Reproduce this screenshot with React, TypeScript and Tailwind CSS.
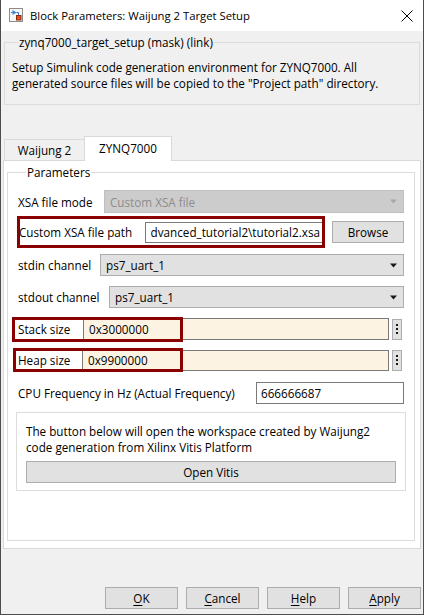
import React from "react";

function Arrow({ disabled }: { disabled?: boolean }) {
  return (
    <svg width="9" height="5" viewBox="0 0 9 5" className="shrink-0">
      <path d="M1 0.5 L8 0.5 L4.5 4.5 Z" fill={disabled ? "#a8a8a8" : "#1a1a1a"} />
    </svg>
  );
}

function Combo({ value, disabled, h = 22 }: { value: string; disabled?: boolean; h?: number }) {
  return (
    <div
      className={
        "flex-1 flex items-center justify-between pl-[5px] pr-[5px] border " +
        (disabled
          ? "bg-[#cccccc] border-[#bfbfbf] text-[#8c8c8c]"
          : "bg-[#e1e1e1] border-[#adadad] text-black")
      }
      style={{ height: h }}
    >
      <span className="whitespace-nowrap">{value}</span>
      <Arrow disabled={disabled} />
    </div>
  );
}

function DotsButton() {
  return (
    <div className="w-[10px] h-[21px] ml-[3px] mr-[2px] border border-[#adadad] bg-[#e1e1e1] flex flex-col items-center justify-center gap-[2px]">
      <div className="w-[2px] h-[2px] bg-[#1a1a1a]" />
      <div className="w-[2px] h-[2px] bg-[#1a1a1a]" />
      <div className="w-[2px] h-[2px] bg-[#1a1a1a]" />
    </div>
  );
}

function Btn({ first, rest }: { first: string; rest: string }) {
  return (
    <div className="w-[73px] h-[22px] border border-[#adadad] bg-[#e1e1e1] flex items-center justify-center text-black">
      <span>
        <span className="underline underline-offset-[2px]">{first}</span>
        {rest}
      </span>
    </div>
  );
}

export default function App() {
  return (
    <div className="w-[424px] h-[615px] bg-[#f0f0f0] border-x border-b border-[#4d4d4d] flex flex-col overflow-hidden font-['Open_Sans','Noto_Sans',sans-serif] text-[11.7px] leading-[16px] text-black">
      {/* Title bar */}
      <div className="h-[31px] bg-white flex items-center shrink-0">
        <div className="ml-[8px] mt-[-2px]">
          <svg width="14" height="14" viewBox="0 0 14 14">
            <rect x="0.5" y="0.5" width="13" height="13" fill="#f6f6f6" stroke="#8c8c8c" />
            <path d="M2 4.5 H3.5" stroke="#2f6fc6" strokeWidth="1" />
            <path d="M3.5 2 L7.5 4.5 L3.5 7 Z" fill="#3b82d6" />
            <path d="M7.5 4.5 H9.5 V7" stroke="#2f6fc6" strokeWidth="1" fill="none" />
            <rect x="7.5" y="7.5" width="4.5" height="4.5" fill="#e2501f" stroke="#8a2a0a" strokeWidth="1" />
          </svg>
        </div>
        <span className="ml-[7px] text-[11.3px] whitespace-nowrap">Block Parameters: Waijung 2 Target Setup</span>
        <div className="ml-auto mr-[10px]">
          <svg width="12" height="12" viewBox="0 0 12 12">
            <path d="M0.5 0.5 L11.5 11.5 M11.5 0.5 L0.5 11.5" stroke="#000" strokeWidth="1" />
          </svg>
        </div>
      </div>

      {/* Mask group box */}
      <fieldset className="mx-[3px] mt-[3px] border border-[#dcdcdc] px-[7px] pb-[13px]">
        <legend className="ml-[6px] px-[1px] whitespace-nowrap">zynq7000_target_setup (mask) (link)</legend>
        <div className="pt-[9px] whitespace-nowrap">
          Setup Simulink code generation environment for ZYNQ7000. All
          <br />
          generated source files will be copied to the "Project path" directory.
        </div>
      </fieldset>

      {/* Tabs */}
      <div className="mt-[31px] ml-[3px] flex items-end h-[25px] relative z-10 -mb-[1px]">
        <div className="w-[80px] h-[21px] mb-[1px] border border-r-0 border-b-0 border-[#d9d9d9] bg-[#f0f0f0] flex items-center justify-center">
          Waijung 2
        </div>
        <div className="w-[88px] h-[25px] border border-b-0 border-[#d9d9d9] bg-white flex items-center justify-center pb-[2px]">
          ZYNQ7000
        </div>
      </div>

      {/* Tab panel */}
      <div className="ml-[2px] mr-[2px] h-[389px] bg-white border border-[#d9d9d9] shrink-0 flex flex-col">
        <fieldset className="ml-[3px] mr-[5px] mt-[3px] border border-[#dcdcdc] pl-[10px] pr-[10px] pb-[49px]">
          <legend className="ml-[8px] px-[1px]">Parameters</legend>

          {/* XSA file mode */}
          <div className="mt-[10px] h-[23px] flex items-center">
            <div className="w-[86px] whitespace-nowrap">XSA file mode</div>
            <Combo value="Custom XSA file" disabled h={23} />
          </div>

          {/* Custom XSA file path */}
          <div className="mt-[3px] h-[32px] flex items-center relative">
            <div className="w-[127px] pl-[1px] whitespace-nowrap">Custom XSA file path</div>
            <div className="w-[178px] h-[21px] border border-[#7a7a7a] bg-white flex items-center justify-end overflow-hidden pr-[2px]">
              <span className="whitespace-nowrap">dvanced_tutorial2\tutorial2.xsa</span>
            </div>
            <div className="ml-[9px] w-[72px] h-[22px] border border-[#adadad] bg-[#e1e1e1] flex items-center justify-center">
              Browse
            </div>
            <div className="absolute left-[-1px] top-0 w-[308px] h-[32px] border-[3px] border-[#8b0000] pointer-events-none" />
          </div>

          {/* stdin */}
          <div className="mt-[6px] h-[22px] flex items-center">
            <div className="w-[82px] whitespace-nowrap">stdin channel</div>
            <Combo value="ps7_uart_1" />
          </div>

          {/* stdout */}
          <div className="mt-[10px] h-[22px] flex items-center">
            <div className="w-[91px] whitespace-nowrap">stdout channel</div>
            <Combo value="ps7_uart_1" />
          </div>

          {/* Stack size */}
          <div className="mt-[9px] h-[24px] flex items-center relative">
            <div className="w-[65px] whitespace-nowrap">Stack size</div>
            <div className="flex-1 h-[22px] border border-[#7a7a7a] bg-[#fdf3e3] flex items-center pl-[5px]">
              0x3000000
            </div>
            <DotsButton />
            <div className="absolute left-[-6px] top-0 w-[171px] h-[25px] border-[3px] border-[#8b0000] pointer-events-none" />
          </div>

          {/* Heap size */}
          <div className="mt-[7px] h-[24px] flex items-center relative">
            <div className="w-[64px] whitespace-nowrap">Heap size</div>
            <div className="flex-1 h-[21px] border border-[#7a7a7a] bg-[#fdf3e3] flex items-center pl-[5px]">
              0x9900000
            </div>
            <DotsButton />
            <div className="absolute left-[-5px] top-0 w-[170px] h-[24px] border-[3px] border-[#8b0000] pointer-events-none" />
          </div>

          {/* CPU Frequency */}
          <div className="mt-[10px] h-[22px] flex items-center">
            <div className="w-[238px] whitespace-nowrap">CPU Frequency in Hz (Actual Frequency)</div>
            <div className="flex-1 h-[22px] border border-[#7a7a7a] bg-white flex items-center pl-[4px]">
              666666687
            </div>
          </div>

          {/* Info box */}
          <div className="mt-[8px] -mx-[2px] border border-[#dcdcdc] pl-[9px] pr-[9px] pt-[10px] pb-[7px]">
            <div className="whitespace-nowrap">
              The button below will open the workspace created by Waijung2
              <br />
              code generation from Xilinx Vitis Platform
            </div>
            <div className="mt-[6px] h-[22px] border border-[#adadad] bg-[#e1e1e1] flex items-center justify-center">
              Open Vitis
            </div>
          </div>
        </fieldset>
      </div>

      {/* Bottom buttons */}
      <div className="mt-[38px] flex justify-end gap-[8px] pr-[2px]">
        <Btn first="O" rest="K" />
        <Btn first="C" rest="ancel" />
        <Btn first="H" rest="elp" />
        <Btn first="A" rest="pply" />
      </div>
    </div>
  );
}
